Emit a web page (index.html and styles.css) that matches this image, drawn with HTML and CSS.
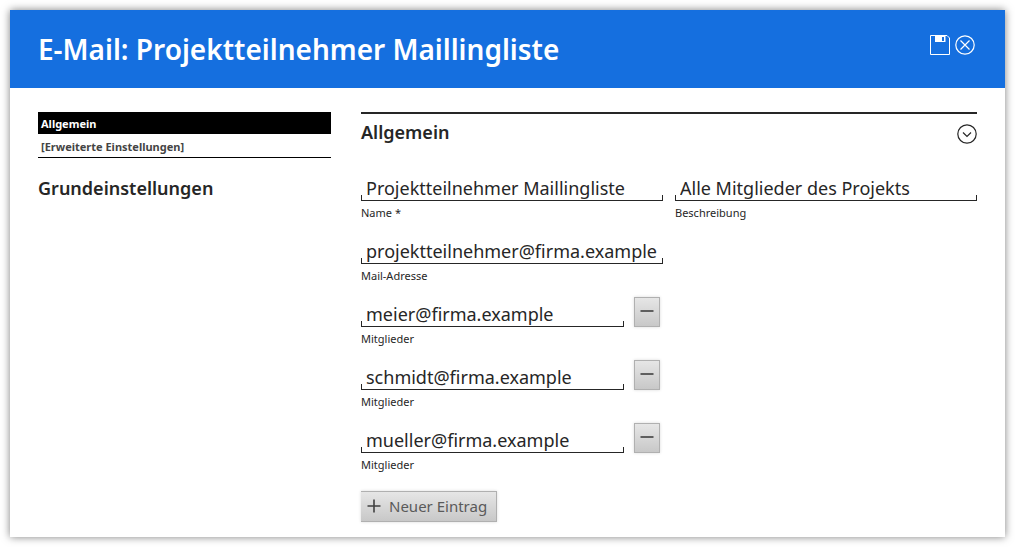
FILE: index.html
```html
<!DOCTYPE html>
<html lang="de">
<head>
<meta charset="utf-8">
<meta name="viewport" content="width=device-width, initial-scale=1">
<title>E-Mail: Projektteilnehmer Maillingliste</title>
<link rel="stylesheet" href="styles.css">
</head>
<body>
<form class="dialog">
  <header class="dialog-header">
    <h1 class="dialog-title">E-Mail: Projektteilnehmer Maillingliste</h1>
    <div class="dialog-actions">
      <button type="button" class="icon-button" aria-label="Speichern">
        <svg width="20" height="20" viewBox="0 0 20 20" fill="none" stroke="currentColor"><path d="M.5.500H17l2.500 2.500v16.500H.5z"/><path d="M5 .5h10.500V7H5z" fill="currentColor" stroke="none"/><path class="shutter" d="M12 2h2v4h-2z"/></svg>
      </button>
      <button type="button" class="icon-button" aria-label="Schließen">
        <svg width="20" height="20" viewBox="0 0 20 20" fill="none" stroke="currentColor" stroke-width="1.200"><circle cx="10" cy="10" r="9.200"/><path d="M5.500 5.500l9 9m0-9l-9 9"/></svg>
      </button>
    </div>
  </header>
  <div class="dialog-body">
    <aside class="sidebar">
      <nav class="tabs">
        <a class="tab tab-active" href="#allgemein">Allgemein</a>
        <a class="tab" href="#erweitert">[Erweiterte Einstellungen]</a>
      </nav>
      <h2 class="section-title">Grundeinstellungen</h2>
    </aside>
    <main class="content" id="allgemein">
      <div class="content-header">
        <h2 class="section-title">Allgemein</h2>
        <button type="button" class="icon-button" aria-label="Bereich einklappen">
          <svg width="20" height="20" viewBox="0 0 20 20" fill="none" stroke="currentColor" stroke-width="1.200"><circle cx="10" cy="10" r="9.200"/><path d="M6 8.500l4 4 4-4"/></svg>
        </button>
      </div>
      <div class="fields">
        <div class="field">
          <input class="field-input" id="name" type="text" value="Projektteilnehmer Maillingliste">
          <label class="field-label" for="name">Name *</label>
        </div>
        <div class="field">
          <input class="field-input" id="beschreibung" type="text" value="Alle Mitglieder des Projekts">
          <label class="field-label" for="beschreibung">Beschreibung</label>
        </div>
        <div class="field field-start">
          <input class="field-input" id="mail" type="text" value="projektteilnehmer@firma.example">
          <label class="field-label" for="mail">Mail-Adresse</label>
        </div>
        <div class="member">
          <div class="field">
            <input class="field-input" id="m1" type="text" value="meier@firma.example">
            <label class="field-label" for="m1">Mitglieder</label>
          </div>
          <button type="button" class="button button-remove" aria-label="Eintrag entfernen"><svg class="button-icon" width="14" height="14" viewBox="0 0 14 14"><path d="M.5 7h13"/></svg></button>
        </div>
        <div class="member">
          <div class="field">
            <input class="field-input" id="m2" type="text" value="schmidt@firma.example">
            <label class="field-label" for="m2">Mitglieder</label>
          </div>
          <button type="button" class="button button-remove" aria-label="Eintrag entfernen"><svg class="button-icon" width="14" height="14" viewBox="0 0 14 14"><path d="M.5 7h13"/></svg></button>
        </div>
        <div class="member">
          <div class="field">
            <input class="field-input" id="m3" type="text" value="mueller@firma.example">
            <label class="field-label" for="m3">Mitglieder</label>
          </div>
          <button type="button" class="button button-remove" aria-label="Eintrag entfernen"><svg class="button-icon" width="14" height="14" viewBox="0 0 14 14"><path d="M.5 7h13"/></svg></button>
        </div>
      </div>
      <button type="button" class="button button-add"><svg class="button-icon" width="14" height="14" viewBox="0 0 14 14"><path d="M.5 7h13M7 .5v13"/></svg>Neuer Eintrag</button>
    </main>
  </div>
</form>
</body>
</html>
```
FILE: styles.css
```css
* {
  box-sizing: border-box;
}

body {
  margin: 0;
  padding: 10px;
  background: #fff;
  color: #262626;
  font-family: "Noto Sans", sans-serif;
}

h1,
h2 {
  margin: 0;
  font-weight: 600;
}

button,
input {
  font-family: inherit;
  color: inherit;
}

svg {
  display: block;
}

.dialog {
  background: #fff;
  box-shadow: 0 0 8px rgba(0, 0, 0, 0.5);
}

.dialog-header {
  display: flex;
  justify-content: space-between;
  align-items: flex-start;
  min-height: 78px;
  padding: 20px 30px 18px 28px;
  background: #156fdf;
  color: #fff;
}

.dialog-title {
  font-size: 28px;
  line-height: 38px;
}

.dialog-actions {
  display: flex;
  gap: 5px;
  padding-top: 5px;
}

.icon-button {
  padding: 0;
  border: 0;
  background: none;
}

.shutter {
  fill: #156fdf;
  stroke: none;
}

.dialog-body {
  display: grid;
  grid-template-columns: 293fr 616fr;
  column-gap: 30px;
  padding: 24px 28px 15px;
}

.tabs {
  margin-bottom: 17px;
  border-bottom: 1px solid #000;
}

.tab {
  display: block;
  padding: 2px 3px 0;
  font-size: 11px;
  font-weight: 700;
  line-height: 21px;
  color: #444;
  text-decoration: none;
}

.tab-active {
  line-height: 20px;
  background: #000;
  color: #fff;
}

.section-title {
  font-size: 18px;
  line-height: 26px;
}

.content-header {
  display: flex;
  justify-content: space-between;
  align-items: flex-start;
  margin-bottom: 31px;
  padding-top: 5px;
  border-top: 2px solid #262626;
}

.content-header .icon-button {
  padding-top: 5px;
}

.fields {
  display: grid;
  grid-template-columns: 1fr 1fr;
  gap: 14px 12px;
}

.field {
  min-width: 0;
  padding-bottom: 4px;
}

.field-start,
.member {
  grid-column: 1;
}

.field-input {
  display: block;
  width: 100%;
  height: 25px;
  padding: 0 4px 2px 5px;
  border: 0;
  background:
    linear-gradient(#262626, #262626) left bottom / 1px 6px no-repeat,
    linear-gradient(#262626, #262626) right bottom / 1px 6px no-repeat,
    linear-gradient(#262626, #262626) left bottom / 100% 1px no-repeat;
  font-size: 18px;
  outline: 0;
}

.field-label {
  display: block;
  padding-top: 4px;
  font-size: 11px;
  line-height: 16px;
}

.member {
  display: grid;
  grid-template-columns: 1fr 26px;
  column-gap: 10px;
  align-items: start;
  padding-right: 3px;
}

.button {
  display: flex;
  align-items: center;
  border: 1px solid #b0b0b0;
  background: linear-gradient(#e6e6e6, #c8c8c8);
  box-shadow: 0 0 3px rgba(0, 0, 0, 0.15);
  color: #5a5a5a;
}

.button-icon {
  stroke: #404040;
  stroke-width: 1.6;
}

.button-remove {
  justify-content: center;
  height: 30px;
  margin-top: -5px;
  padding: 0 0 2px;
}

.button-add {
  height: 31px;
  margin-top: 14px;
  padding: 0 9px 2px 6px;
  gap: 8px;
  border-left: 0;
  font-size: 15px;
}
```
